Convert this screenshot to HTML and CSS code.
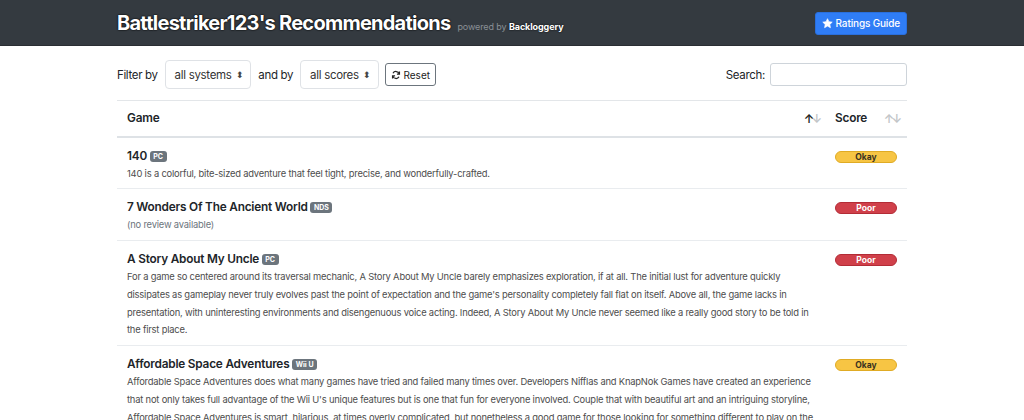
FILE: index.html
```html
<!DOCTYPE html>
<html>
<head>
<meta charset="utf-8">
<link rel="stylesheet" href="styles.css">
</head>
<body>
<header class="topbar">
  <div class="container topbar-inner">
    <h1 class="title">Battlestriker123's Recommendations <small class="powered">powered by <b>Backloggery</b></small></h1>
    <button class="btn-guide"><svg class="star" viewBox="0 0 24 24" width="11" height="11"><path fill="#fff" d="M12 1.5l3.1 6.6 7.2.9-5.3 5 1.4 7.1L12 17.6l-6.4 3.5L7 14l-5.3-5 7.2-.9z" stroke="#fff" stroke-width="1.5" stroke-linejoin="round"/></svg>Ratings Guide</button>
  </div>
</header>
<main class="container">
  <div class="filters">
    <div class="filter-left">
      <span class="lbl">Filter by</span>
      <span class="select">all systems <span class="caret">⬍</span></span>
      <span class="lbl">and by</span>
      <span class="select">all scores <span class="caret">⬍</span></span>
      <button class="btn-reset"><svg viewBox="0 0 16 16" width="10" height="10"><path d="M13.5 2.5v4h-4" fill="none" stroke="#222" stroke-width="2"/><path d="M13 6.3A5.3 5.3 0 0 0 3.2 5.2" fill="none" stroke="#222" stroke-width="2"/><path d="M2.5 13.5v-4h4" fill="none" stroke="#222" stroke-width="2"/><path d="M3 9.7a5.3 5.3 0 0 0 9.8 1.1" fill="none" stroke="#222" stroke-width="2"/></svg>Reset</button>
    </div>
    <label class="search"><span>Search:</span><span class="search-input"></span></label>
  </div>
  <table class="games">
    <thead>
      <tr>
        <th class="col-game"><div class="th-inner">Game<span class="sort"><span class="up dark">↑</span><span class="down">↓</span></span></div></th>
        <th class="col-score"><div class="th-inner">Score<span class="sort"><span class="up">↑</span><span class="down">↓</span></span></div></th>
      </tr>
    </thead>
    <tbody>
      <tr>
        <td><div class="g-title">140 <span class="plat">PC</span></div><div class="g-desc">140 is a colorful, bite-sized adventure that feel tight, precise, and wonderfully-crafted.</div></td>
        <td><span class="score okay">Okay</span></td>
      </tr>
      <tr>
        <td><div class="g-title">7 Wonders Of The Ancient World <span class="plat">NDS</span></div><div class="g-desc none">(no review available)</div></td>
        <td><span class="score poor">Poor</span></td>
      </tr>
      <tr>
        <td><div class="g-title">A Story About My Uncle <span class="plat">PC</span></div><div class="g-desc">For a game so centered around its traversal mechanic, A Story About My Uncle barely emphasizes exploration, if at all. The initial lust for adventure quickly dissipates as gameplay never truly evolves past the point of expectation and the game's personality completely fall flat on itself. Above all, the game lacks in presentation, with uninteresting environments and disengenuous voice acting. Indeed, A Story About My Uncle never seemed like a really good story to be told in the first place.</div></td>
        <td><span class="score poor">Poor</span></td>
      </tr>
      <tr>
        <td><div class="g-title">Affordable Space Adventures <span class="plat">Wii U</span></div><div class="g-desc">Affordable Space Adventures does what many games have tried and failed many times over. Developers Nifflas and KnapNok Games have created an experience that not only takes full advantage of the Wii U's unique features but is one that fun for everyone involved. Couple that with beautiful art and an intriguing storyline, Affordable Space Adventures is smart, hilarious, at times overly complicated, but nonetheless a good game for those looking for something different to play on the Wii U.</div></td>
        <td><span class="score okay">Okay</span></td>
      </tr>
    </tbody>
  </table>
</main>
</body>
</html>
```
FILE: styles.css
```css
* { box-sizing: border-box; }
body {
  margin: 0;
  font-family: Inter, "Liberation Sans", sans-serif;
  color: #212529;
  background: #fff;
  font-size: 12px;
}
.container { width: 790px; margin: 0 auto; }
.topbar {
  background: #343a40;
  height: 46px;
  border-bottom: 1px solid #2a2e33;
}
.topbar-inner {
  height: 100%;
  display: flex;
  align-items: center;
  justify-content: space-between;
}
.title {
  margin: 0;
  font-size: 20px;
  font-weight: 700;
  color: #fff;
  letter-spacing: -0.75px;
  text-shadow: 0 0 2px #000, 0 0 1px #000;
}
.powered {
  font-size: 9px;
  font-weight: 400;
  color: #8a9096;
  text-shadow: none;
  letter-spacing: -0.1px;
  margin-left: 3px;
}
.powered b { color: #fff; font-weight: 700; text-shadow: 0 0 2px #000; }
.btn-guide {
  display: flex;
  align-items: center;
  gap: 3px;
  height: 23px;
  padding: 0 6px 0 6px;
  background: #2f7df6;
  color: #fff;
  border: 1px solid #2a6fdc;
  border-radius: 3px;
  font: 500 10px Inter, "Liberation Sans", sans-serif;
  letter-spacing: -0.15px;
  margin-top: 1px;
}
.filters {
  display: flex;
  justify-content: space-between;
  align-items: center;
  margin-top: 14px;
  height: 29px;
}
.filter-left { display: flex; align-items: center; gap: 7px; }
.lbl { font-size: 11.5px; letter-spacing: -0.35px; color: #212529; }
.lbl.and { letter-spacing: -0.5px; }
.select {
  display: inline-flex;
  align-items: center;
  height: 29px;
  padding: 0 7px 0 9px;
  border: 1px solid #dfe2e6;
  border-radius: 4px;
  font-size: 11.5px;
  letter-spacing: -0.3px;
  color: #333;
  gap: 4px;
}
.caret { font-size: 9px; color: #444; }
.btn-reset {
  display: flex;
  align-items: center;
  gap: 3px;
  height: 23px;
  padding: 0 5px;
  background: #fff;
  border: 1px solid #6c757d;
  border-radius: 3px;
  font: 400 10px Inter, "Liberation Sans", sans-serif;
  color: #222;
  margin-left: -1px;
}
.search { display: flex; align-items: center; gap: 5px; font-size: 11.5px; letter-spacing: -0.3px; }
.search-input {
  width: 137px;
  height: 23px;
  border: 1px solid #ced4da;
  border-radius: 3px;
}
.games {
  width: 100%;
  border-collapse: collapse;
  margin-top: 11px;
}
.games th {
  text-align: left;
  font-weight: 600;
  font-size: 11.8px;
  letter-spacing: -0.2px;
  height: 36px;
  padding: 0 10px;
  border-top: 1px solid #e3e6e9;
  border-bottom: 2px solid #dee2e6;
  vertical-align: middle;
}
.th-inner { display: flex; justify-content: space-between; align-items: center; }
.col-score { width: 80px; }
.sort { font-size: 12px; letter-spacing: -3px; color: #c2c5c8; }
.sort .dark { color: #222; }
.col-game .sort { margin-right: -4px; }
.col-score .sort { margin-right: -2px; }
.games td {
  padding: 9px 10px 6px;
  border-bottom: 1px solid #e9ecef;
  vertical-align: top;
}
.g-title { font-size: 11.8px; letter-spacing: -0.2px; font-weight: 600; line-height: 18px; }
.plat {
  display: inline-block;
  background: #6c757d;
  color: #fff;
  font-size: 7px;
  font-weight: 700;
  line-height: 9px;
  padding: 1px 3.5px;
  border-radius: 3px;
  vertical-align: 1px;
  letter-spacing: 0;
}
.g-desc { font-size: 9.4px; letter-spacing: -0.2px; line-height: 17.8px; color: #4d4d4d; }
.g-desc.none { color: #6c757d; }
.score {
  display: block;
  margin-top: 4px;
  width: 62px;
  height: 12px;
  border-radius: 6px;
  font-size: 8.5px;
  font-weight: 700;
  line-height: 10px;
  text-align: center;
}
.okay { background: #f7c544; border: 1px solid #e0ab24; color: #3a3220; }
.poor { background: #d0404a; border: 1px solid #b32c36; color: #fff; }
```
